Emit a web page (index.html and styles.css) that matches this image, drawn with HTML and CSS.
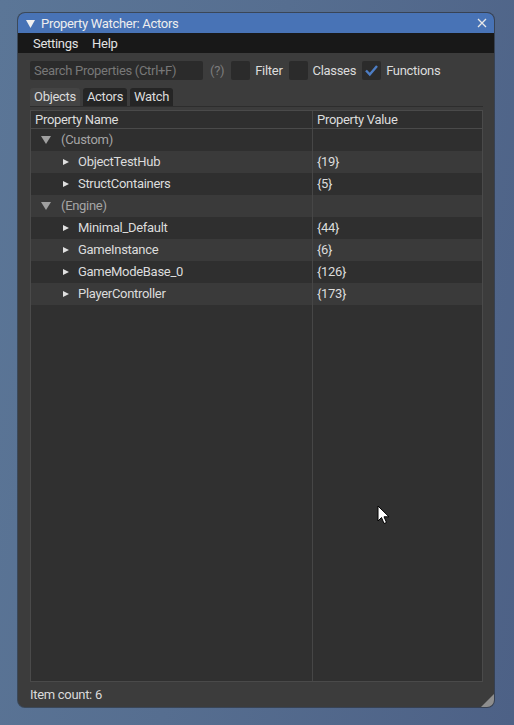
FILE: index.html
```html
<!DOCTYPE html>
<html>
<head>
<meta charset="utf-8">
<link rel="stylesheet" href="styles.css">
</head>
<body>
<div class="window">
  <div class="titlebar">
    <svg class="title-arrow" width="9" height="8" viewBox="0 0 9 8"><polygon points="0,0 9,0 4.5,8" fill="#f0f0f0"/></svg>
    <span class="title">Property Watcher: Actors</span>
    <svg class="close" width="10" height="10" viewBox="0 0 10 10"><path d="M1 1 L9 9 M9 1 L1 9" stroke="#e8e8e8" stroke-width="1.3" fill="none"/></svg>
  </div>
  <div class="menubar">
    <span class="menu">Settings</span>
    <span class="menu">Help</span>
  </div>
  <div class="content">
    <div class="searchrow">
      <div class="search">Search Properties (Ctrl+F)</div>
      <span class="help">(?)</span>
      <span class="check"></span><span class="label">Filter</span>
      <span class="check"></span><span class="label">Classes</span>
      <span class="check"><svg width="19" height="19" viewBox="0 0 19 19"><path d="M4 9.5 L7.8 13.5 L15 5" stroke="#4d7dc4" stroke-width="2.4" fill="none"/></svg></span><span class="label">Functions</span>
    </div>
    <div class="tabs">
      <span class="tab active">Objects</span>
      <span class="tab">Actors</span>
      <span class="tab">Watch</span>
    </div>
    <div class="table">
      <div class="row header"><div class="c1">Property Name</div><div class="c2">Property Value</div></div>
      <div class="row dark group"><div class="c1"><span class="tri-down"></span>(Custom)</div><div class="c2"></div></div>
      <div class="row light"><div class="c1 item"><span class="tri-right"></span>ObjectTestHub</div><div class="c2">{19}</div></div>
      <div class="row dark"><div class="c1 item"><span class="tri-right"></span>StructContainers</div><div class="c2">{5}</div></div>
      <div class="row light group"><div class="c1"><span class="tri-down"></span>(Engine)</div><div class="c2"></div></div>
      <div class="row dark"><div class="c1 item"><span class="tri-right"></span>Minimal_Default</div><div class="c2">{44}</div></div>
      <div class="row light"><div class="c1 item"><span class="tri-right"></span>GameInstance</div><div class="c2">{6}</div></div>
      <div class="row dark"><div class="c1 item"><span class="tri-right"></span>GameModeBase_0</div><div class="c2">{126}</div></div>
      <div class="row light"><div class="c1 item"><span class="tri-right"></span>PlayerController</div><div class="c2">{173}</div></div>
      <div class="row filler"><div class="c1"></div><div class="c2"></div></div>
    </div>
    <div class="footer">Item count: 6</div>
  </div>
  <div class="grip"></div>
</div>
<svg class="cursor" width="14" height="21" viewBox="0 0 14 21"><path d="M1 1 L1 16 L4.5 12.5 L7 18.5 L9.5 17.5 L7 11.8 L12 11.8 Z" fill="#ffffff" stroke="#000000" stroke-width="1"/></svg>
</body>
</html>
```
FILE: styles.css
```css
html, body {
  margin: 0;
  padding: 0;
}
body {
  width: 514px;
  height: 725px;
  overflow: hidden;
  background: linear-gradient(100deg, #5b7697 0%, #566e90 45%, #4d6186 100%);
  font-family: Roboto, "Noto Sans", "Liberation Sans", sans-serif;
  font-size: 13px;
  letter-spacing: -0.3px;
  color: #dcdcdc;
  position: relative;
  padding-top: 13px;
  box-sizing: border-box;
}
.window {
  margin-left: 18px;
  width: 476px;
  height: 694px;
  border-radius: 7px;
  background: #3c3c3c;
  overflow: hidden;
  display: flex;
  flex-direction: column;
  position: relative;
  box-shadow: 0 0 0 1px rgba(30,30,30,0.5);
}
.titlebar {
  height: 20px;
  background: #4873b6;
  display: flex;
  align-items: center;
  padding-left: 8px;
  padding-right: 7px;
  color: #eeeeee;
}
.title-arrow { margin-right: 6px; margin-top: 1px; }
.title { flex: 1; }
.menubar {
  height: 20px;
  background: #181818;
  display: flex;
  align-items: center;
  padding-left: 15px;
  gap: 14px;
  color: #e2e2e2;
}
.content {
  flex: 1;
  display: flex;
  flex-direction: column;
  padding: 8px 11px 0 12px;
}
.searchrow {
  display: flex;
  align-items: center;
  height: 19px;
}
.search {
  width: 169px;
  height: 19px;
  line-height: 19px;
  background: #2b2b2b;
  border-radius: 2px;
  color: #787878;
  padding-left: 4px;
}
.help {
  color: #7d7d7d;
  margin-left: 7px;
  margin-right: 7px;
}
.check {
  width: 19px;
  height: 19px;
  background: #2b2b2b;
  border-radius: 2px;
  display: inline-block;
}
.check svg { display: block; }
.label {
  margin-left: 5px;
  margin-right: 6px;
}
.tabs {
  margin-top: 8px;
  display: flex;
  gap: 3px;
  height: 18px;
  border-bottom: 1px solid #2d2d2d;
}
.tab {
  height: 18px;
  line-height: 18px;
  padding: 0 4px;
  background: #252525;
  border-radius: 3px 3px 0 0;
}
.tab.active { background: #444444; }
.table {
  margin-top: 3px;
  width: 453px;
  height: 572px;
  box-sizing: border-box;
  border: 1px solid #4a4a4a;
  display: flex;
  flex-direction: column;
  background: #303030;
}
.row {
  display: flex;
  height: 22px;
  line-height: 22px;
}
.row .c1 {
  width: 282px;
  border-right: 1px solid #464646;
  padding-left: 4px;
  box-sizing: border-box;
  display: flex;
  align-items: center;
}
.row .c2 {
  flex: 1;
  padding-left: 4px;
}
.header {
  height: 17px;
  line-height: 17px;
  background: #2f2f2f;
  border-bottom: 1px solid #4a4a4a;
}
.dark { background: #2f2f2f; }
.light { background: #3a3a3a; }
.group .c1 { color: #a5a5a5; padding-left: 10px; }
.item { padding-left: 32px !important; }
.tri-down {
  width: 0; height: 0;
  border-left: 5px solid transparent;
  border-right: 5px solid transparent;
  border-top: 8px solid #a0a0a0;
  margin-right: 10px;
}
.tri-right {
  width: 0; height: 0;
  border-top: 3.5px solid transparent;
  border-bottom: 3.5px solid transparent;
  border-left: 6px solid #e0e0e0;
  margin-right: 9px;
}
.filler { flex: 1; height: auto; background: #303030; }
.footer {
  height: 25px;
  line-height: 25px;
  color: #dadada;
}
.grip {
  position: absolute;
  right: 0;
  bottom: 0;
  width: 0; height: 0;
  border-left: 13px solid transparent;
  border-bottom: 13px solid #8e8e8e;
}
.cursor {
  position: absolute;
  left: 377px;
  top: 505px;
}
```
